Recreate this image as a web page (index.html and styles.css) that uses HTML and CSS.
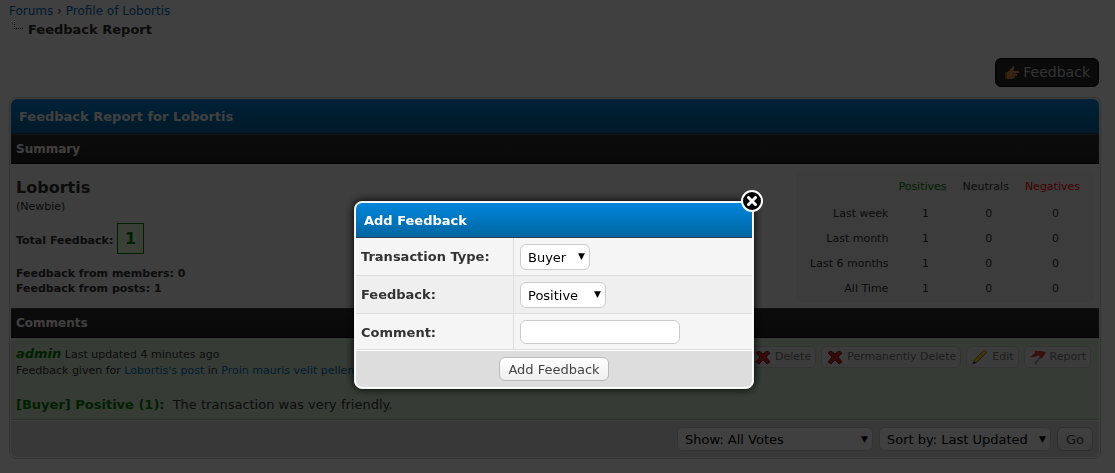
FILE: index.html
```
<!DOCTYPE html>
<html lang="en">
  <head>
    <meta charset="UTF-8" />
    <meta name="viewport" content="width=device-width, initial-scale=1.0" />
    <title>Feedback Report for Lobortis</title>
    <link rel="stylesheet" href="styles.css">
  </head>
  <body>
    <div class="page">
      <div class="navigation">
        <a href="#">Forums</a> › <a href="#">Profile of Lobortis</a>
        <div class="nav-current">
          <svg class="nav-bit" width="9" height="10" viewBox="0 0 9 10"><path d="M.5 0V9M0 8.500H9" fill="none" stroke="#000" stroke-dasharray="1 1" /></svg>
          <span class="active">Feedback Report</span>
        </div>
      </div>

      <div class="top-buttons">
        <a href="#" class="give-button">
          <svg width="16" height="16" viewBox="0 0 16 16"><path d="M1 8l4-2 4-5q2 0 1 3L9 6h6v2h-4v1h2v2h-2v2H9v1H4l-3-1z" fill="#d8974a" /><path d="M1 8l2-1v7l-2-1z" fill="#a85f22" /><path d="M8 8.500h4M8 11.500h3" stroke="#a0622c" /></svg>
          Feedback
        </a>
      </div>

      <div class="tborder">
        <div class="thead">Feedback Report for Lobortis</div>
        <div class="tcat">Summary</div>
        <div class="summary">
          <div class="member">
            <div class="member-name">Lobortis</div>
            <div class="member-title">(Newbie)</div>
            <div class="total">Total Feedback: <span class="repbox">1</span></div>
            <div class="sources">
              <div>Feedback from members: 0</div>
              <div>Feedback from posts: 1</div>
            </div>
          </div>
          <div class="stats">
            <table>
              <tr>
                <td></td>
                <th class="positive">Positives</th>
                <th>Neutrals</th>
                <th class="negative">Negatives</th>
              </tr>
              <tr><td class="period">Last week</td><td>1</td><td>0</td><td>0</td></tr>
              <tr><td class="period">Last month</td><td>1</td><td>0</td><td>0</td></tr>
              <tr><td class="period">Last 6 months</td><td>1</td><td>0</td><td>0</td></tr>
              <tr><td class="period">All Time</td><td>1</td><td>0</td><td>0</td></tr>
            </table>
          </div>
        </div>
        <div class="tcat">Comments</div>
        <div class="comment">
          <div class="comment-info">
            <div><a href="#" class="author">admin</a> Last updated 4 minutes ago</div>
            <div>Feedback given for <a href="#">Lobortis's post</a> in <a href="#">Proin mauris velit pellentesque</a></div>
            <div class="comment-text"><strong>[Buyer] Positive (1):</strong> The transaction was very friendly.</div>
          </div>
          <div class="comment-tools">
            <a href="#" class="tool">
              <svg width="16" height="16" viewBox="0 0 16 16"><path d="M4 2l4 3 4-3 3 2-4 4 4 5-3 2-4-4-4 4-3-2 4-5-4-4z" fill="#d42a2a" stroke="#961818" /></svg>
              Delete
            </a>
            <a href="#" class="tool">
              <svg width="16" height="16" viewBox="0 0 16 16"><path d="M4 2l4 3 4-3 3 2-4 4 4 5-3 2-4-4-4 4-3-2 4-5-4-4z" fill="#d42a2a" stroke="#961818" /></svg>
              Permanently Delete
            </a>
            <a href="#" class="tool">
              <svg width="16" height="16" viewBox="0 0 16 16"><path d="M2 11L12 1l3 2L5 13l-4 2z" fill="#f2d23c" stroke="#9c8420" /><path d="M11 2l3 2 1-1-3-2z" fill="#e0a080" /><path d="M1 15l1-3 2 2z" fill="#222" /></svg>
              Edit
            </a>
            <a href="#" class="tool">
              <svg width="16" height="16" viewBox="0 0 16 16"><path d="M11 7L5 15" stroke="#999" stroke-width="2" /><path d="M5 1q2 2 5 1l6 1q-1 3-5 7L9 6Q4 9 0 8l5-4z" fill="#dd3c3c" /></svg>
              Report
            </a>
          </div>
        </div>
        <form class="tfoot">
          <span class="select show-select">
            <select aria-label="Show"><option>Show: All Votes</option></select>
          </span>
          <span class="select sort-select">
            <select aria-label="Sort by"><option>Sort by: Last Updated</option></select>
          </span>
          <button type="button" class="button">Go</button>
        </form>
      </div>
    </div>

    <div class="overlay">
      <form class="modal">
        <a href="#" class="close-modal" aria-label="Close">
          <svg width="26" height="26" viewBox="0 0 26 26"><circle cx="13" cy="13" r="10" fill="#000" stroke="#fff" stroke-width="2" /><path d="M9.500 9.500l7 7m0-7l-7 7" stroke="#fff" stroke-width="3" stroke-linecap="round" /></svg>
        </a>
        <div class="thead">Add Feedback</div>
        <div class="row">
          <label for="type">Transaction Type:</label>
          <div class="field">
            <span class="select type-select">
              <select id="type"><option>Buyer</option><option>Seller</option><option>Trade</option></select>
            </span>
          </div>
        </div>
        <div class="row alt">
          <label for="feedback">Feedback:</label>
          <div class="field">
            <span class="select feedback-select">
              <select id="feedback"><option>Positive</option><option>Neutral</option><option>Negative</option></select>
            </span>
          </div>
        </div>
        <div class="row">
          <label for="comment">Comment:</label>
          <div class="field"><input type="text" id="comment" class="textbox" /></div>
        </div>
        <div class="modal-foot">
          <button type="button" class="button">Add Feedback</button>
        </div>
      </form>
    </div>
  </body>
</html>
```
FILE: styles.css
```
* {
  box-sizing: border-box;
}

body {
  margin: 0;
  background: #fff;
  color: #333;
  font-family: Verdana, "DejaVu Sans", sans-serif;
  font-size: 13px;
  line-height: 18px;
}

a {
  color: #0072bc;
  text-decoration: none;
}

.page {
  padding: 2px 14px 12px 9px;
}

/* Breadcrumb */
.navigation {
  font-size: 12px;
}

.nav-current {
  display: flex;
  padding-left: 5px;
  gap: 5px;
}

.active {
  font-size: 13px;
  font-weight: bold;
  line-height: 20px;
}

.top-buttons {
  display: flex;
  justify-content: flex-end;
  padding: 18px 2px 10px 0;
}

.give-button {
  display: flex;
  align-items: center;
  gap: 3px;
  padding: 5px 8px;
  background: #292929;
  border: 1px solid #000;
  border-radius: 6px;
  color: #ccc;
  font-size: 14px;
  line-height: 17px;
}

/* Main table */
.tborder {
  background: #fff;
  border: 1px solid #ccc;
  border-radius: 7px;
  padding: 1px;
}

.thead {
  background: linear-gradient(#0085db, #0066a2);
  border-bottom: 1px solid #263c50;
  border-radius: 6px 6px 0 0;
  color: #fff;
  font-weight: bold;
  padding: 9px 8px 7px;
}

.tcat {
  background: linear-gradient(#303030, #242424);
  border-top: 1px solid #444;
  border-bottom: 1px solid #000;
  color: #fff;
  font-size: 12px;
  font-weight: bold;
  line-height: 16px;
  padding: 6px 5px;
}

.summary {
  display: flex;
  justify-content: space-between;
  background: #f5f5f5;
  padding: 6px 5px 5px;
}

.member {
  padding-top: 8px;
  font-size: 11px;
  line-height: 15px;
}

.member-name {
  font-size: 16px;
  font-weight: bold;
  line-height: 20px;
}

.member-title {
  line-height: 18px;
}

.total {
  padding-top: 7px;
  font-weight: bold;
  line-height: 32px;
}

.repbox {
  display: inline-block;
  padding: 0 7px;
  background: #e8fcdc;
  border: 1px solid #008000;
  color: #008000;
  font-size: 16px;
  line-height: 29px;
}

.sources {
  padding-top: 9px;
  font-weight: bold;
}

.stats {
  background: #efefef;
  border: 1px solid #eee;
  border-radius: 6px;
  padding: 3px 2px 1px 8px;
}

.stats table {
  border-collapse: collapse;
  font-size: 11px;
  line-height: 15px;
}

.stats td,
.stats th {
  padding: 5px 8px;
  font-weight: normal;
  text-align: center;
}

.stats th {
  padding: 5px 11px 7px 5px;
}

.stats .period {
  padding: 5px;
  text-align: right;
}

.stats .positive {
  color: #008000;
}

.stats .negative {
  color: #f00;
}

/* Comments */
.comment {
  display: flex;
  justify-content: space-between;
  background: #d6ecd6;
  border-bottom: 1px solid #bbb;
  padding: 8px 8px 6px 5px;
  font-size: 11px;
  line-height: 16px;
}

.author {
  color: #008000;
  font-size: 13px;
  font-style: italic;
  font-weight: bold;
}

.comment-text {
  padding-top: 18px;
  font-size: 13px;
}

.comment-text strong {
  margin-right: 4px;
  color: #008000;
}

.comment-tools {
  display: flex;
  align-items: flex-start;
  gap: 5px;
}

.tool {
  display: flex;
  align-items: center;
  gap: 4px;
  padding: 2px 4px 2px 5px;
  background: #efefef;
  border: 1px solid #ccc;
  border-radius: 6px;
  color: #777;
}

.tfoot {
  display: flex;
  justify-content: flex-end;
  gap: 6px;
  background: #ddd;
  border-top: 1px solid #fff;
  border-radius: 0 0 6px 6px;
  padding: 6px;
}

/* Controls */
.button,
.textbox,
.select select {
  height: 24px;
  background: #fff;
  border: 1px solid #ccc;
  border-radius: 6px;
  color: #000;
  font-family: inherit;
  font-size: 13px;
}

.button {
  padding: 0 8px;
  background: linear-gradient(#fff, #efefef);
  border-color: #bbb;
  color: #444;
}

.textbox {
  width: 160px;
}

.select {
  display: inline-block;
  position: relative;
}

.select select {
  display: block;
  width: 100%;
  height: 26px;
  padding: 0 7px;
  appearance: none;
}

.select::after {
  content: "▼";
  position: absolute;
  right: 5px;
  top: 0;
  color: #000;
  font-size: 9px;
  line-height: 25px;
  pointer-events: none;
}

.show-select {
  width: 196px;
}

.sort-select {
  width: 172px;
}

.tfoot .select select {
  height: 24px;
}

.type-select {
  width: 70px;
}

.feedback-select {
  width: 86px;
}

/* Modal */
.overlay {
  position: fixed;
  inset: 0;
  display: flex;
  align-items: flex-start;
  justify-content: center;
  padding: 201px 7px 0 0;
  background: rgba(0, 0, 0, 0.75);
}

.modal {
  position: relative;
  width: 400px;
  background: #fff;
  border: 1px solid #eee;
  border-radius: 8px;
  box-shadow: 0 0 10px #000;
  padding: 1px;
}

.close-modal {
  position: absolute;
  top: -14px;
  right: -12px;
  height: 26px;
}

.row {
  display: flex;
  background: #f5f5f5;
  border-bottom: 1px solid #ddd;
}

.row label {
  width: 158px;
  border-right: 1px solid #ddd;
  padding: 10px 5px 7px;
  font-weight: bold;
}

.alt {
  background: #efefef;
}

.field {
  padding: 6px 6px 5px;
}

.modal-foot {
  background: #ddd;
  border-top: 1px solid #fff;
  border-radius: 0 0 6px 6px;
  padding: 6px;
  text-align: center;
}

.modal-foot .button {
  display: block;
  margin: 0 auto;
}
```
